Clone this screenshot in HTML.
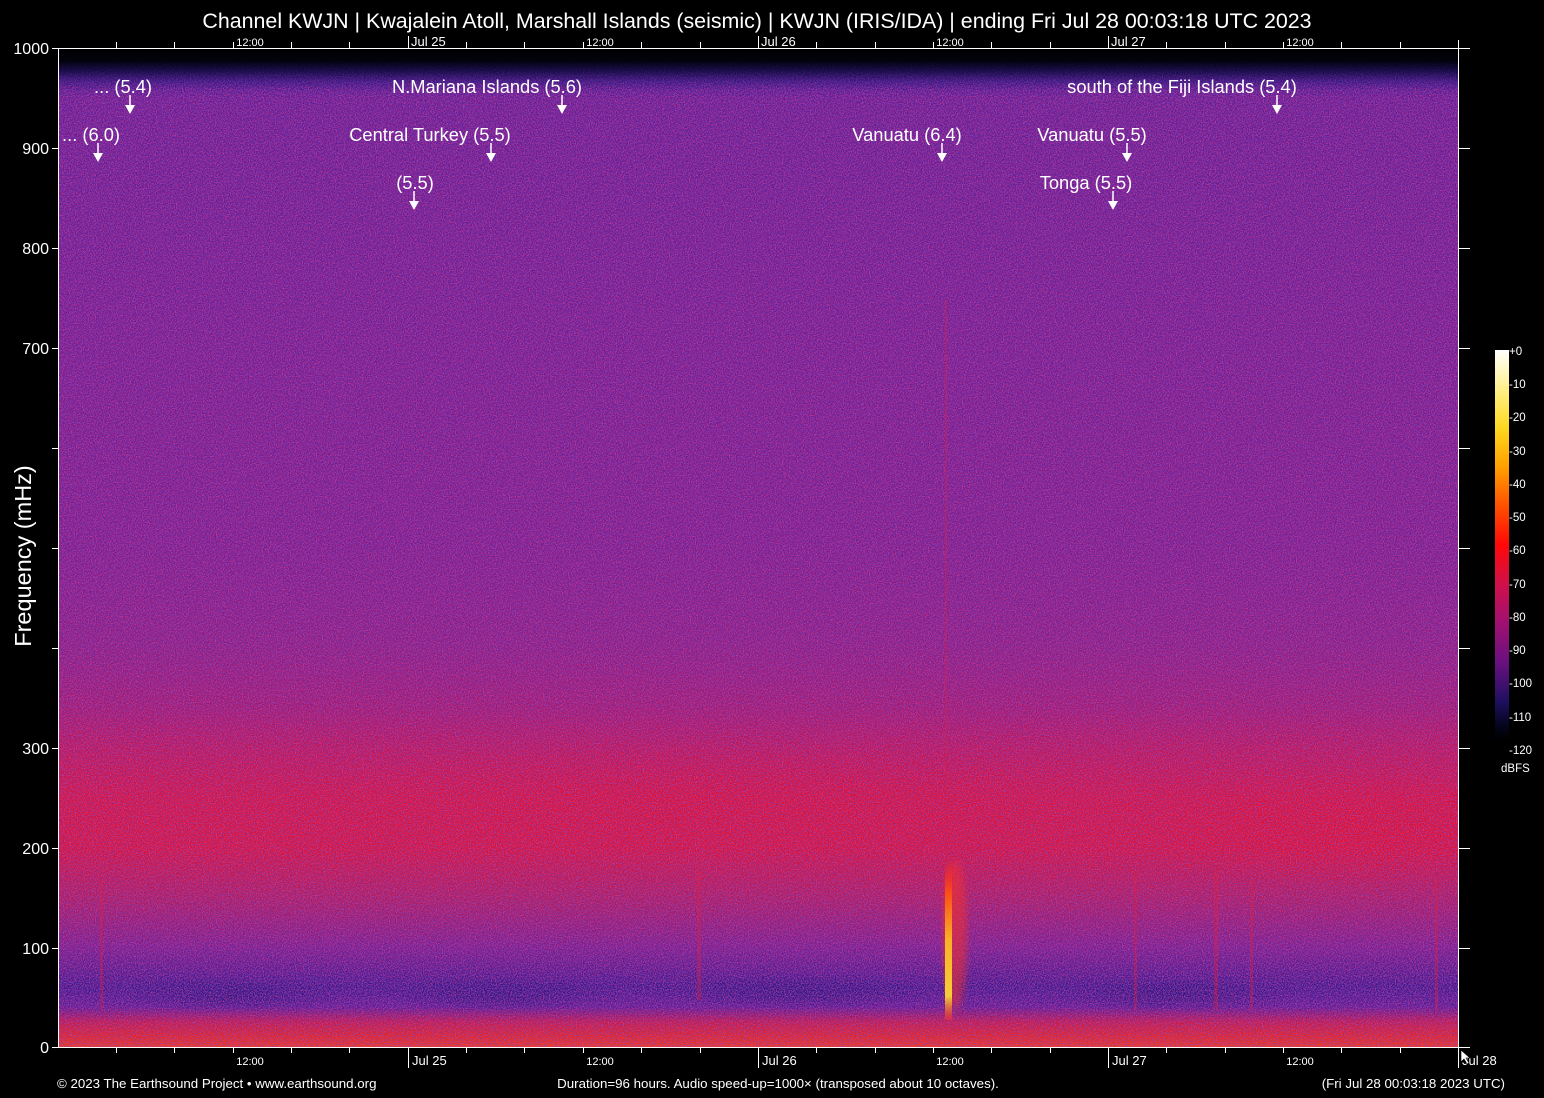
<!DOCTYPE html>
<html><head><meta charset="utf-8"><style>
html,body{margin:0;padding:0;background:#000;}
svg{display:block;font-family:"Liberation Sans",Arial,sans-serif;}
</style></head><body>
<svg width="1544" height="1098" viewBox="0 0 1544 1098" xmlns="http://www.w3.org/2000/svg">
<defs>
<clipPath id="pc"><rect x="58" y="48" width="1401" height="999"/></clipPath>
<linearGradient id="vg" x1="0" y1="48" x2="0" y2="1047" gradientUnits="userSpaceOnUse">
<stop offset="0" stop-color="#000"/>
<stop offset="0.01" stop-color="#02020a"/>
<stop offset="0.02" stop-color="#140a50"/>
<stop offset="0.033" stop-color="#3a1888"/>
<stop offset="0.05" stop-color="#641c8e"/>
<stop offset="0.3" stop-color="#721c8c"/>
<stop offset="0.5" stop-color="#7a1c88"/>
<stop offset="0.6" stop-color="#881c80"/>
<stop offset="0.66" stop-color="#a0186c"/>
<stop offset="0.7" stop-color="#c01450"/>
<stop offset="0.75" stop-color="#dc1034"/>
<stop offset="0.8" stop-color="#de1030"/>
<stop offset="0.85" stop-color="#b01a58"/>
<stop offset="0.9" stop-color="#781c88"/>
<stop offset="0.94" stop-color="#381688"/>
<stop offset="0.96" stop-color="#5a1a90"/>
<stop offset="0.975" stop-color="#c81840"/>
<stop offset="0.99" stop-color="#ec2414"/>
<stop offset="1" stop-color="#f43c14"/>
</linearGradient>
<linearGradient id="top" x1="0" y1="48" x2="0" y2="90" gradientUnits="userSpaceOnUse">
<stop offset="0" stop-color="#000" stop-opacity="1"/>
<stop offset="0.3" stop-color="#02020c" stop-opacity="1"/>
<stop offset="0.55" stop-color="#100a40" stop-opacity="0.8"/>
<stop offset="0.8" stop-color="#2a1470" stop-opacity="0.35"/>
<stop offset="1" stop-color="#2a1470" stop-opacity="0"/>
</linearGradient>
<radialGradient id="rb" cx="0.5" cy="0.5" r="0.5">
<stop offset="0" stop-color="#ee0a1a" stop-opacity="0.6"/>
<stop offset="1" stop-color="#ee0a1a" stop-opacity="0"/>
</radialGradient>
<radialGradient id="db" cx="0.5" cy="0.5" r="0.5">
<stop offset="0" stop-color="#1a1070" stop-opacity="0.6"/>
<stop offset="1" stop-color="#1a1070" stop-opacity="0"/>
</radialGradient>
<linearGradient id="ev" x1="0" y1="0" x2="0" y2="1">
<stop offset="0" stop-color="#ff2020" stop-opacity="0"/>
<stop offset="0.2" stop-color="#ff5010"/>
<stop offset="0.5" stop-color="#ffc020"/>
<stop offset="0.85" stop-color="#ffe030"/>
<stop offset="1" stop-color="#ff3020" stop-opacity="0.5"/>
</linearGradient>
<linearGradient id="cb" x1="0" y1="0" x2="0" y2="1">
<stop offset="0" stop-color="#ffffff"/>
<stop offset="0.1" stop-color="#fff08a"/>
<stop offset="0.2" stop-color="#ffd820"/>
<stop offset="0.3" stop-color="#ffa000"/>
<stop offset="0.4" stop-color="#ff5000"/>
<stop offset="0.5" stop-color="#ff0808"/>
<stop offset="0.6" stop-color="#d0104a"/>
<stop offset="0.7" stop-color="#a01070"/>
<stop offset="0.8" stop-color="#6a1080"/>
<stop offset="0.9" stop-color="#201060"/>
<stop offset="0.96" stop-color="#050520"/>
<stop offset="1" stop-color="#000"/>
</linearGradient>
<filter id="nz" x="0" y="0" width="100%" height="100%">
<feTurbulence type="fractalNoise" baseFrequency="0.9" numOctaves="1" seed="3"/>
<feColorMatrix type="matrix" values="0 0 0 0 0.16  0 0 0 0 0.06  0 0 0 0 0.55  4 0 0 0 -1.8"/>
</filter>
<filter id="nz2" x="0" y="0" width="100%" height="100%">
<feTurbulence type="fractalNoise" baseFrequency="0.85" numOctaves="1" seed="9"/>
<feColorMatrix type="matrix" values="0 0 0 0 0.85  0 0 0 0 0.05  0 0 0 0 0.3  4 0 0 0 -1.8"/>
</filter>
<filter id="bl"><feGaussianBlur stdDeviation="4"/></filter>
</defs>
<rect width="1544" height="1098" fill="#000"/>
<g clip-path="url(#pc)">
<rect x="58" y="48" width="1401" height="999" fill="url(#vg)"/>
<ellipse cx="1350" cy="830" rx="220" ry="60" fill="url(#rb)"/>
<ellipse cx="700" cy="800" rx="400" ry="60" fill="url(#rb)" opacity="0.5"/>
<ellipse cx="230" cy="995" rx="120" ry="18" fill="url(#db)"/>
<ellipse cx="500" cy="995" rx="120" ry="18" fill="url(#db)"/>
<ellipse cx="800" cy="992" rx="140" ry="18" fill="url(#db)"/>
<ellipse cx="1170" cy="995" rx="120" ry="18" fill="url(#db)"/>
<rect x="58" y="48" width="1401" height="999" filter="url(#nz2)" opacity="0.7"/>
<rect x="58" y="48" width="1401" height="999" filter="url(#nz)" opacity="0.75"/>
<rect x="58" y="48" width="1401" height="42" fill="url(#top)"/>
<g fill="#e02040" opacity="0.35">
<rect x="100" y="880" width="3" height="130"/>
<rect x="697" y="870" width="4" height="130"/>
<rect x="1134" y="870" width="3" height="140"/>
<rect x="1214" y="870" width="4" height="140"/>
<rect x="1250" y="880" width="3" height="130"/>
<rect x="1435" y="880" width="3" height="130"/>
</g>
<rect x="945" y="300" width="2" height="720" fill="#d02050" opacity="0.4"/>
<ellipse cx="955" cy="935" rx="12" ry="75" fill="#ff3020" opacity="0.5" filter="url(#bl)"/>
<rect x="945" y="860" width="7" height="160" fill="url(#ev)" opacity="0.9"/>
</g>
<g stroke="#fff" stroke-width="1" fill="none">
<line x1="58.5" y1="48" x2="58.5" y2="1047"/>
<line x1="1458.5" y1="40" x2="1458.5" y2="1047"/>
<line x1="52" y1="48.5" x2="1470" y2="48.5"/>
<line x1="52" y1="1047.5" x2="1470" y2="1047.5"/>
<path d="M52 148.5h6M52 248.5h6M52 348.5h6M52 448.5h6M52 548.5h6M52 648.5h6M52 748.5h6M52 848.5h6M52 948.5h6"/>
<path d="M1459 148.5h11M1459 248.5h11M1459 348.5h11M1459 448.5h11M1459 548.5h11M1459 648.5h11M1459 748.5h11M1459 848.5h11M1459 948.5h11"/>
<path d="M116.5 48v-6M174.5 48v-6M233.5 48v-6M291.5 48v-6M349.5 48v-6M408.5 48v-12M466.5 48v-6M524.5 48v-6M583.5 48v-6M641.5 48v-6M700.5 48v-6M758.5 48v-12M816.5 48v-6M875.5 48v-6M933.5 48v-6M991.5 48v-6M1050.5 48v-6M1108.5 48v-12M1166.5 48v-6M1225.5 48v-6M1283.5 48v-6M1341.5 48v-6M1400.5 48v-6"/>
<path d="M116.5 1047v6M174.5 1047v6M233.5 1047v6M291.5 1047v6M349.5 1047v6M408.5 1047v21M466.5 1047v6M524.5 1047v6M583.5 1047v6M641.5 1047v6M700.5 1047v6M758.5 1047v21M816.5 1047v6M875.5 1047v6M933.5 1047v6M991.5 1047v6M1050.5 1047v6M1108.5 1047v21M1166.5 1047v6M1225.5 1047v6M1283.5 1047v6M1341.5 1047v6M1400.5 1047v6M1458.5 1047v21"/>
</g>
<g fill="#fff" font-size="16" text-anchor="end">
<text x="49" y="54">1000</text><text x="49" y="154">900</text><text x="49" y="254">800</text><text x="49" y="354">700</text>
<text x="49" y="754">300</text><text x="49" y="854">200</text><text x="49" y="954">100</text><text x="49" y="1053">0</text>
</g>
<text transform="translate(31,556) rotate(-90)" fill="#fff" font-size="23.5" text-anchor="middle">Frequency (mHz)</text>
<g fill="#fff" font-size="11" text-anchor="middle">
<text x="250" y="46">12:00</text><text x="600" y="46">12:00</text><text x="950" y="46">12:00</text><text x="1300" y="46">12:00</text>
<text x="250" y="1065">12:00</text><text x="600" y="1065">12:00</text><text x="950" y="1065">12:00</text><text x="1300" y="1065">12:00</text>
</g>
<g fill="#fff" font-size="13">
<text x="411" y="46">Jul 25</text><text x="761" y="46">Jul 26</text><text x="1111" y="46">Jul 27</text>
<text x="412" y="1065">Jul 25</text><text x="762" y="1065">Jul 26</text><text x="1112" y="1065">Jul 27</text><text x="1462" y="1065">Jul 28</text>
</g>
<text x="757" y="28" fill="#fff" font-size="21.4" text-anchor="middle">Channel KWJN | Kwajalein Atoll, Marshall Islands (seismic) | KWJN (IRIS/IDA) | ending Fri Jul 28 00:03:18 UTC 2023</text>
<g fill="#fff" font-size="18.3" text-anchor="middle">
<text x="123" y="93">... (5.4)</text>
<text x="487" y="93">N.Mariana Islands (5.6)</text>
<text x="1182" y="93">south of the Fiji Islands (5.4)</text>
<text x="91" y="141">... (6.0)</text>
<text x="430" y="141">Central Turkey (5.5)</text>
<text x="907" y="141">Vanuatu (6.4)</text>
<text x="1092" y="141">Vanuatu (5.5)</text>
<text x="415" y="189">(5.5)</text>
<text x="1086" y="189">Tonga (5.5)</text>
</g>
<g stroke="#fff" stroke-width="1.5">
<path d="M130 95v10M562 95v10M1277 95v10M98 143v10M491 143v10M942 143v10M1127 143v10M414 191v10M1113 191v10"/>
</g>
<g fill="#fff">
<path d="M125 105h10l-5 9z"/><path d="M557 105h10l-5 9z"/><path d="M1272 105h10l-5 9z"/>
<path d="M93 153h10l-5 9z"/><path d="M486 153h10l-5 9z"/><path d="M937 153h10l-5 9z"/><path d="M1122 153h10l-5 9z"/>
<path d="M409 201h10l-5 9z"/><path d="M1108 201h10l-5 9z"/>
</g>
<rect x="1495" y="350" width="14" height="390" fill="url(#cb)"/>
<g fill="#fff" font-size="11.5">
<text x="1509" y="355">+0</text><text x="1509" y="388">-10</text><text x="1509" y="421">-20</text><text x="1509" y="455">-30</text>
<text x="1509" y="488">-40</text><text x="1509" y="521">-50</text><text x="1509" y="554">-60</text><text x="1509" y="588">-70</text>
<text x="1509" y="621">-80</text><text x="1509" y="654">-90</text><text x="1509" y="687">-100</text><text x="1509" y="721">-110</text>
<text x="1509" y="754">-120</text><text x="1501" y="772">dBFS</text>
</g>
<g fill="#fff" font-size="13.3">
<text x="57" y="1088">© 2023 The Earthsound Project • www.earthsound.org</text>
<text x="778" y="1088" text-anchor="middle">Duration=96 hours. Audio speed-up=1000× (transposed about 10 octaves).</text>
<text x="1505" y="1088" text-anchor="end">(Fri Jul 28 00:03:18 2023 UTC)</text>
</g>
<path d="M1461 1050v12l3-3 3 5 2-1-3-5h4z" fill="#fff" stroke="#000" stroke-width="0.6"/>
</svg>
</body></html>
